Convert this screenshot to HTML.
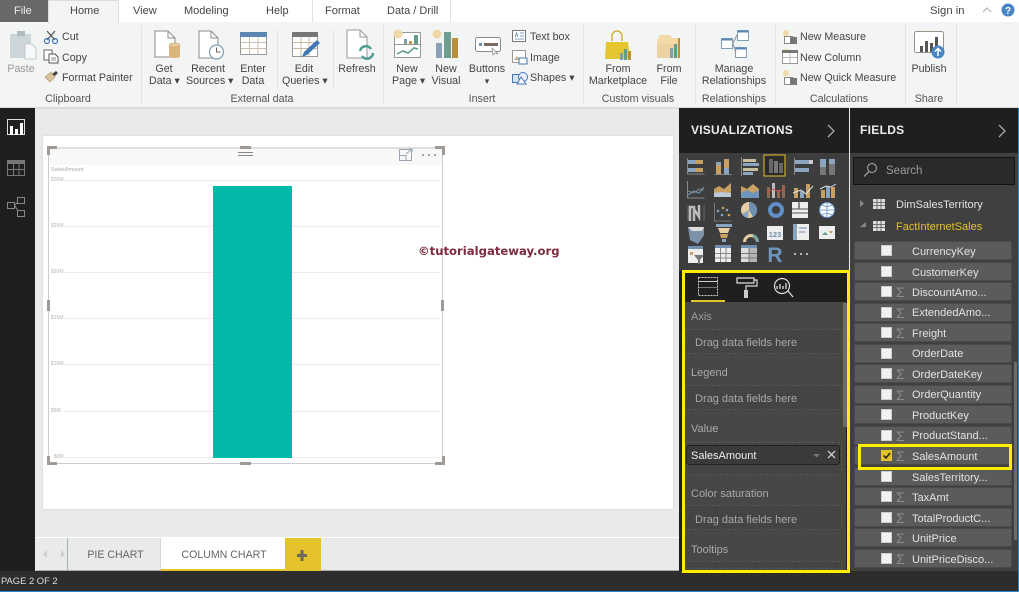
<!DOCTYPE html>
<html><head><meta charset="utf-8"><style>
*{box-sizing:border-box}
html,body{margin:0;padding:0}
body{width:1019px;height:592px;overflow:hidden;position:relative;background:#e9eaea;font-family:"Liberation Sans",sans-serif;font-size:11px;color:#444}
.a{position:absolute}
.t{position:absolute;white-space:nowrap;line-height:14px}
.c{transform:translateX(-50%)}
.g{color:#555}
.w{color:#a9a9a9;font-size:11px;margin-top:1px}
.dz{position:absolute;left:685px;width:157px;border:1px dashed #555;background:#444;border-radius:2px}
.r{position:absolute;left:854px;width:158px;height:19px;background:#5b5b5b;border:1px solid #4a4a4a;border-radius:2px}
.cb{position:absolute;left:881px;width:11px;height:11px;background:#f2f2f2;border:1px solid #ccc}
.s{position:absolute;left:896px;color:#8d8d8d;font-size:14px;line-height:14px}
.f{position:absolute;left:912px;color:#e2e2e2;font-size:11px;line-height:14px;white-space:nowrap;margin-top:1px}
.ax{position:absolute;left:51px;font-size:5px;color:#b5b5b5;line-height:6px}
.gl{position:absolute;left:64px;width:376px;height:1px;background:#ededed}
.h{position:absolute;background:#a09a96}
</style></head><body>

<!-- ribbon -->
<div class="a" style="left:0;top:0;width:1019px;height:22px;background:#fff"></div>
<div class="a" style="left:0;top:22px;width:1019px;height:85px;background:#f3f4f4"></div>
<div class="a" style="left:0;top:107px;width:1019px;height:2px;background:#dcdcdc"></div>
<div class="a" style="left:0;top:0;width:48px;height:22px;background:#686868"></div>
<div class="a" style="left:48px;top:0;width:71px;height:23px;background:#f3f4f4;border:1px solid #ddd;border-bottom:0"></div>
<div class="a" style="left:312px;top:0;width:1px;height:22px;background:#e2e2e2"></div>
<div class="a" style="left:450px;top:0;width:1px;height:22px;background:#e2e2e2"></div>
<div class="t" style="left:14px;top:4px;color:#eee">File</div>
<div class="t" style="left:70px;top:4px">Home</div>
<div class="t" style="left:133px;top:4px">View</div>
<div class="t" style="left:184px;top:4px">Modeling</div>
<div class="t" style="left:266px;top:4px">Help</div>
<div class="t" style="left:325px;top:4px">Format</div>
<div class="t" style="left:387px;top:4px">Data / Drill</div>
<div class="t" style="left:930px;top:4px;font-size:11.300px">Sign in</div>

<svg class="a" style="left:0;top:0" width="1019" height="108" viewBox="0 0 1019 108" fill="none">
<g stroke="#e0e1e1"><path d="M141.500 25V104M277.500 30V88M333.500 30V88M383.500 25V104M583.500 25V104M695.500 25V104M775.500 25V104M905.500 25V104M956.500 25V104"/></g>
<path d="M983 12l4-4 4 4" stroke="#bbb" stroke-width="1.300"/>
<circle cx="1008" cy="10" r="6.500" fill="#4a86c5"/>
<text x="1008" y="14" font-family="Liberation Sans" font-size="10" font-weight="bold" fill="#fff" text-anchor="middle">?</text>
<!-- paste -->
<rect x="10" y="34" width="21" height="24" fill="#ccd5da"/><rect x="17" y="31" width="8" height="5" fill="#aebcc5"/><path d="M25 44h7l4 4v11H25z" fill="#f7f9fa" stroke="#c3cbd0"/>
<!-- cut -->
<path d="M47 31l8 9M55 31l-8 9" stroke="#555" stroke-width="1.300"/><circle cx="47" cy="41" r="2.500" stroke="#3f78b5" stroke-width="1.200"/><circle cx="55" cy="41" r="2.500" stroke="#3f78b5" stroke-width="1.200"/>
<!-- copy -->
<path d="M44 50h8v10h-8z" fill="#fff" stroke="#666"/><path d="M49 54h6l3 3v6h-9z" fill="#fff" stroke="#555"/><path d="M51 58h5M51 60h5" stroke="#888"/>
<!-- painter -->
<path d="M45 77l6-5 4 5-5 5z" fill="#d8c49a" stroke="#aa9568" stroke-width=".6"/><path d="M52 74l4-3 2 2-3 3z" fill="#444"/>
<!-- get data -->
<path d="M155 31h13l7 7v19h-20z" fill="#fff" stroke="#8b8b8b"/><path d="M168 31v7h7" stroke="#8b8b8b"/><path d="M169 45v12q5 2 11 0V45z" fill="#dcb57a"/><ellipse cx="174.500" cy="45" rx="5.500" ry="2" fill="#e8cda3" stroke="#c79d5f" stroke-width=".5"/>
<!-- recent -->
<path d="M199 31h12l7 7v20h-19z" fill="#fff" stroke="#8b8b8b"/><path d="M211 31v7h7" stroke="#8b8b8b"/><circle cx="216.500" cy="52" r="7" fill="#fff" stroke="#7d9fb8" stroke-width="1.200"/><path d="M216.500 47.500V52h4" stroke="#666"/>
<!-- enter data -->
<rect x="240.500" y="32.500" width="26" height="22" fill="#fff" stroke="#9a9a9a"/><rect x="240" y="32" width="27" height="5" fill="#5d86b3"/><path d="M241 42.500h25M241 48.500h25M249.500 37v17M258 37v17" stroke="#c9c0b0"/>
<!-- edit queries -->
<rect x="292.500" y="32.500" width="25" height="24" fill="#fff" stroke="#9a9a9a"/><rect x="292" y="32" width="26" height="5" fill="#777"/><path d="M293 42.500h24M293 48.500h24M301 37v19M309 37v19" stroke="#c9b9a0"/><path d="M302 57l2-5 13-12 3 3-13 12z" fill="#3f78b5"/>
<!-- refresh -->
<path d="M347 30h13l7 7v21h-20z" fill="#fff" stroke="#9a9a9a"/><path d="M360 30v7h7" stroke="#9a9a9a"/><path d="M360 51a6 6 0 0 1 11-2M373 53a6 6 0 0 1-11 3" stroke="#4f9d8f" stroke-width="2.500"/>
<!-- new page -->
<rect x="394.500" y="32.500" width="26" height="25" fill="#fff" stroke="#9a9a9a"/><path d="M394 44.500h27" stroke="#999"/><rect x="404" y="39" width="3" height="5" fill="#7f9fb0"/><rect x="409" y="41" width="3" height="3" fill="#c09a55"/><rect x="414" y="35" width="4" height="9" fill="#5f9d8d"/><path d="M397 54l6-3 5 2 6-5 4 1" stroke="#5f9d8d" stroke-width="1.500"/><circle cx="398" cy="34" r="4.500" fill="#f0d9a8"/>
<!-- new visual -->
<circle cx="437" cy="34" r="4.500" fill="#f0d9a8"/><rect x="436" y="43" width="6" height="15" fill="#8ba0b6"/><rect x="444" y="32" width="7" height="26" fill="#6f9e90"/><rect x="452" y="38" width="6" height="20" fill="#b59040"/>
<!-- buttons -->
<rect x="475.500" y="37.500" width="25" height="14" rx="2" fill="#fff" stroke="#888"/><rect x="479" y="43" width="3" height="3" fill="#6b93b8"/><rect x="484" y="43" width="14" height="3" fill="#7a6a60"/><path d="M492 48l1 7 2-2 3 1z" fill="#fff" stroke="#888" stroke-width=".7"/>
<!-- text box -->
<rect x="512.500" y="30.500" width="13" height="11" fill="#fff" stroke="#777"/><path d="M515 37l1.500-4 1.500 4M520 33h4M520 36h4M515 39h9" stroke="#4f7fae" stroke-width=".8"/>
<!-- image -->
<rect x="512.500" y="50.500" width="13" height="12" fill="#fff" stroke="#999"/><path d="M514 60l3-4 3 4z" fill="#c6b38c"/><rect x="519" y="58" width="8" height="6" fill="#fff" stroke="#3f78b5"/>
<!-- shapes -->
<rect x="512.500" y="74.500" width="8" height="8" fill="#d6e4f0" stroke="#3f78b5"/><circle cx="523" cy="77" r="4.500" fill="#eef" stroke="#3f78b5"/><path d="M517 84l4-7 5 7z" fill="#fff" stroke="#3f78b5"/>
<!-- marketplace -->
<path d="M606 42h22l2 17h-25z" fill="#e6c62f"/><path d="M612 41v-5a5 5 0 0 1 10 0v5" stroke="#c9ab2a" stroke-width="1.300"/><rect x="620" y="53" width="3" height="7" fill="#7f9fb0"/><rect x="624" y="49" width="3" height="11" fill="#5f9d8d"/><rect x="628" y="51" width="3" height="9" fill="#b59040"/>
<!-- from file -->
<path d="M657 40l3-5h10l2 3h8v20h-23z" fill="#f3d9a6"/><path d="M657 44h23v14h-23z" fill="#ecd3a4"/><rect x="670" y="48" width="3" height="10" fill="#7f9fb0"/><rect x="674" y="44" width="3" height="14" fill="#5f9d8d"/><rect x="678" y="38" width="2" height="20" fill="#b59040"/>
<!-- manage rel -->
<rect x="737.500" y="30.500" width="11" height="10" fill="#fff" stroke="#7f9fb8"/><rect x="721.500" y="38.500" width="11" height="10" fill="#fff" stroke="#7f9fb8"/><rect x="735.500" y="47.500" width="11" height="10" fill="#fff" stroke="#7f9fb8"/><path d="M733 43l4-8M733 44l3 8" stroke="#888"/><path d="M738 31.500h10M722 39.500h10M736 48.500h10" stroke="#5d86b3" stroke-width="2"/>
<!-- calc icons -->
<circle cx="786" cy="33" r="3" fill="#f0d9a8"/><path d="M784.500 36.500h8l4 3v4h-12z" fill="#fff" stroke="#888"/><rect x="790" y="37" width="7" height="7" fill="#777"/>
<circle cx="786" cy="52" r="3" fill="#f0d9a8"/><rect x="782.500" y="50.500" width="15" height="13" fill="#fff" stroke="#999"/><rect x="782" y="50" width="16" height="3" fill="#777"/><path d="M783 57.500h14M790 53v10" stroke="#bbb"/>
<circle cx="786" cy="73" r="3" fill="#f0d9a8"/><path d="M784.500 77.500h8l4 3v4h-12z" fill="#fff" stroke="#888"/><rect x="790" y="78" width="7" height="7" fill="#777"/>
<!-- publish -->
<rect x="914.500" y="31.500" width="29" height="21" rx="2" fill="#fff" stroke="#9a9187"/><rect x="920" y="46" width="3" height="6" fill="#555"/><rect x="925" y="41" width="3" height="11" fill="#555"/><rect x="930" y="43" width="3" height="9" fill="#555"/><rect x="935" y="37" width="3" height="12" fill="#555"/><circle cx="938" cy="52" r="6.500" fill="#4a86c5"/><path d="M938 56v-7M935 51.500l3-3 3 3" stroke="#fff" stroke-width="1.500"/>
</svg>

<div class="a" style="left:0;top:1px;width:1019px;height:107px;font-size:10.700px">
<div class="t" style="left:62px;top:29px">Cut</div>
<div class="t" style="left:62px;top:50px">Copy</div>
<div class="t" style="left:62px;top:70px">Format Painter</div>
<div class="t c" style="left:21px;top:61px;color:#999">Paste</div>
<div class="t c" style="left:164px;top:61px">Get</div>
<div class="t" style="left:149px;top:73px">Data ▾</div>
<div class="t c" style="left:208px;top:61px">Recent</div>
<div class="t" style="left:186px;top:73px">Sources ▾</div>
<div class="t c" style="left:253px;top:61px">Enter</div>
<div class="t c" style="left:253px;top:73px">Data</div>
<div class="t c" style="left:304px;top:61px">Edit</div>
<div class="t" style="left:282px;top:73px">Queries ▾</div>
<div class="t c" style="left:357px;top:61px">Refresh</div>
<div class="t c" style="left:407px;top:61px">New</div>
<div class="t" style="left:392px;top:73px">Page ▾</div>
<div class="t c" style="left:446px;top:61px">New</div>
<div class="t c" style="left:446px;top:73px">Visual</div>
<div class="t c" style="left:487px;top:61px">Buttons</div>
<div class="t c" style="left:487px;top:73px;font-size:9px">▾</div>
<div class="t" style="left:530px;top:29px">Text box</div>
<div class="t" style="left:530px;top:50px">Image</div>
<div class="t" style="left:530px;top:70px">Shapes ▾</div>
<div class="t c" style="left:618px;top:61px">From</div>
<div class="t c" style="left:618px;top:73px">Marketplace</div>
<div class="t c" style="left:669px;top:61px">From</div>
<div class="t c" style="left:669px;top:73px">File</div>
<div class="t c" style="left:734px;top:61px">Manage</div>
<div class="t c" style="left:734px;top:73px">Relationships</div>
<div class="t" style="left:800px;top:29px">New Measure</div>
<div class="t" style="left:800px;top:50px">New Column</div>
<div class="t" style="left:800px;top:70px">New Quick Measure</div>
<div class="t c" style="left:929px;top:61px">Publish</div>
<div class="t c g" style="left:68px;top:91px">Clipboard</div>
<div class="t c g" style="left:262px;top:91px">External data</div>
<div class="t c g" style="left:482px;top:91px">Insert</div>
<div class="t c g" style="left:638px;top:91px">Custom visuals</div>
<div class="t c g" style="left:734px;top:91px">Relationships</div>
<div class="t c g" style="left:839px;top:91px">Calculations</div>
<div class="t c g" style="left:929px;top:91px">Share</div>
</div>

<!-- left rail -->
<div class="a" style="left:0;top:108px;width:35px;height:463px;background:#1f1f1f"></div>
<svg class="a" style="left:0;top:108px" width="35" height="110" fill="none">
<rect x="7.500" y="11.500" width="17" height="15" stroke="#ddd"/><rect x="10" y="18" width="3" height="9" fill="#fff"/><rect x="15" y="21" width="3" height="6" fill="#fff"/><rect x="20" y="15" width="3" height="12" fill="#fff"/>
<rect x="7.500" y="52.500" width="17" height="15" stroke="#777"/><rect x="7" y="52" width="18" height="4" fill="#777"/><path d="M8 61.500h16M13.500 56v11M19 56v11" stroke="#777"/>
<rect x="17.500" y="89.500" width="7" height="6" stroke="#888"/><rect x="7.500" y="94.500" width="7" height="6" stroke="#888"/><rect x="17.500" y="102.500" width="7" height="6" stroke="#888"/><path d="M15 97l3-3M15 98l3 5" stroke="#888"/>
</svg>

<!-- canvas -->
<div class="a" style="left:43px;top:136px;width:630px;height:373px;background:#fff;box-shadow:0 0 2px #ccc"></div>
<div class="a" style="left:48px;top:147px;width:395px;height:317px;border:1px solid #c8ced4"></div>
<div class="a" style="left:49px;top:148px;width:393px;height:17px;background:#f7f8f7"></div>
<div class="a" style="left:48px;top:147px;width:395px;height:2px;background:#dfdfdf"></div>
<div class="a" style="left:51px;top:167px;font-size:5.500px;color:#aaa;line-height:7px">SalesAmount</div>
<div class="gl" style="top:180px"></div><div class="gl" style="top:226px"></div><div class="gl" style="top:272px"></div><div class="gl" style="top:318px"></div><div class="gl" style="top:364px"></div><div class="gl" style="top:411px"></div><div class="gl" style="top:457px"></div>
<div class="ax" style="top:177px">$30M</div><div class="ax" style="top:223px">$25M</div><div class="ax" style="top:269px">$20M</div><div class="ax" style="top:315px">$15M</div><div class="ax" style="top:361px">$10M</div><div class="ax" style="top:408px">$5M</div><div class="ax" style="top:454px;left:54px">$0M</div>
<div class="a" style="left:213px;top:186px;width:79px;height:272px;background:#01b8aa"></div>
<!-- handles -->
<div class="h" style="left:47px;top:146px;width:10px;height:3px"></div><div class="h" style="left:47px;top:146px;width:3px;height:9px"></div>
<div class="h" style="left:435px;top:146px;width:10px;height:3px"></div><div class="h" style="left:442px;top:146px;width:3px;height:9px"></div>
<div class="h" style="left:47px;top:462px;width:10px;height:3px"></div><div class="h" style="left:47px;top:456px;width:3px;height:9px"></div>
<div class="h" style="left:435px;top:462px;width:10px;height:3px"></div><div class="h" style="left:442px;top:456px;width:3px;height:9px"></div>
<div class="h" style="left:240px;top:146px;width:11px;height:3px"></div><div class="h" style="left:240px;top:462px;width:11px;height:3px"></div>
<div class="h" style="left:47px;top:300px;width:3px;height:11px"></div><div class="h" style="left:441px;top:300px;width:3px;height:11px"></div>
<svg class="a" style="left:230px;top:148px" width="215" height="18" fill="none">
<path d="M8 4.500h15M8 7.500h15" stroke="#888"/>
<rect x="169.500" y="1.500" width="12" height="11" stroke="#9aa5b0"/><path d="M169 7.500h7v5M176 6l6-5M179 1h3v3" stroke="#9aa5b0"/>
<circle cx="193" cy="7" r="1" fill="#888"/><circle cx="199" cy="7" r="1" fill="#888"/><circle cx="205" cy="7" r="1" fill="#888"/>
</svg>
<div class="t" style="left:418px;top:244px;font-family:'DejaVu Sans',sans-serif;font-weight:bold;font-size:11.650px;color:#7d2b3d">©tutorialgateway.org</div>

<!-- page tabs -->
<div class="a" style="left:36px;top:537px;width:643px;height:1px;background:#fff"></div>
<div class="a" style="left:67px;top:538px;width:1px;height:33px;background:#aab0b8"></div>
<div class="a" style="left:160px;top:538px;width:1px;height:33px;background:#d4d8dc"></div>
<div class="a" style="left:161px;top:538px;width:124px;height:33px;background:#fff"></div>
<div class="a" style="left:161px;top:569px;width:124px;height:2px;background:#e3c22b"></div>
<div class="a" style="left:285px;top:538px;width:36px;height:33px;background:#e3c22b"></div>
<div class="a" style="left:36px;top:570px;width:125px;height:1px;background:#aaa"></div>
<div class="a" style="left:321px;top:570px;width:358px;height:1px;background:#aaa"></div>
<svg class="a" style="left:36px;top:545px" width="285" height="20"><path d="M7 9l-4 4 4 4zM21 9l4 4-4 4z" transform="translate(4 -4)" fill="#cfcfcf"/><path d="M261 8h10v3h-10zM264.500 4h3v11h-3z" transform="translate(0 1)" fill="#6d6a58"/></svg>
<div class="t c" style="left:115.500px;top:548px;color:#666;font-size:10.600px">PIE CHART</div>
<div class="t c" style="left:224px;top:548px;color:#666;font-size:10.600px">COLUMN CHART</div>

<!-- status bar -->
<div class="a" style="left:0;top:571px;width:1019px;height:21px;background:#2d2d2d"></div>
<div class="a" style="left:0;top:591px;width:1019px;height:1px;background:#2a86c8"></div>
<div class="t" style="left:1px;top:574px;color:#ddd;font-size:9.400px">PAGE 2 OF 2</div>

<!-- viz pane -->
<div class="a" style="left:679px;top:108px;width:170px;height:463px;background:#1f1f1f"></div>
<div class="a" style="left:679px;top:153px;width:170px;height:118px;background:#3d3d3d"></div>
<div class="a" style="left:685px;top:302px;width:161px;height:268px;background:#474747"></div>
<div class="t" style="left:691px;top:123px;color:#eee;font-size:12px;font-weight:bold;letter-spacing:.2px">VISUALIZATIONS</div>
<svg class="a" style="left:825px;top:123px" width="14" height="16" fill="none"><path d="M3 2l6 6-6 6" stroke="#aaa" stroke-width="1.300"/></svg>
<svg class="a" style="left:679px;top:153px" width="170" height="118" fill="none">
<rect x="85" y="2" width="21" height="21" fill="#2b2b2b" stroke="#e3c22b"/>
<g fill="#8aa5bf"><rect x="9" y="7" width="8" height="4"/><rect x="9" y="15" width="8" height="4"/></g><g fill="#c7a062"><rect x="17" y="7" width="7" height="4"/><rect x="17" y="15" width="7" height="4"/></g><path d="M8.500 5v16h17" stroke="#888"/>
<rect x="37" y="12" width="5" height="9" fill="#c7a062"/><rect x="37" y="9" width="5" height="3" fill="#8aa5bf"/><rect x="45" y="6" width="5" height="9" fill="#c7a062"/><rect x="45" y="15" width="5" height="6" fill="#8aa5bf"/><path d="M35.500 21.500h17" stroke="#888"/>
<g fill="#c7bda0"><rect x="64" y="6" width="13" height="3"/><rect x="64" y="15" width="15" height="3"/></g><g fill="#8aa5bf"><rect x="64" y="10" width="16" height="3"/><rect x="64" y="19" width="10" height="3"/></g><path d="M62.500 4v19" stroke="#888"/>
<rect x="90" y="6" width="4" height="14" fill="#666"/><rect x="95" y="8" width="4" height="12" fill="#777"/><rect x="100" y="10" width="4" height="10" fill="#666"/>
<rect x="116" y="7" width="14" height="4" fill="#8aa5bf"/><rect x="116" y="15" width="14" height="4" fill="#8aa5bf"/><rect x="130" y="7" width="4" height="4" fill="#ccc"/><path d="M115.500 5v17" stroke="#888"/>
<rect x="141" y="6" width="6" height="8" fill="#8aa5bf"/><rect x="141" y="14" width="6" height="8" fill="#777"/><rect x="150" y="6" width="6" height="5" fill="#8aa5bf"/><rect x="150" y="11" width="6" height="11" fill="#777"/>
<path d="M9 42l6-4 5 2 5-6" stroke="#6f8fb0" stroke-width="1.300"/><path d="M9 38l6 2 5-4 5 1" stroke="#888"/><path d="M8.500 28v17h17" stroke="#888"/>
<path d="M35 44v-8l5-3 5 3 7-6v14z" fill="#c7a062"/><path d="M35 44v-4l8-1 9 1v4z" fill="#b9c9d9"/>
<path d="M62 45V33l6 3 6-5 6 5V45z" fill="#c7a062"/><path d="M62 40l6-3 6 3 6-3v8H62z" fill="#6f95bf"/>
<g fill="#8d6a50"><rect x="88" y="34" width="3" height="11"/><rect x="98" y="37" width="3" height="8"/><rect x="103" y="32" width="3" height="13"/></g><rect x="93" y="30" width="3" height="15" fill="#bbb"/><path d="M88 40l6-4 6 3 6-5" stroke="#c7505a"/>
<g fill="#c7a062"><rect x="115" y="35" width="4" height="10"/><rect x="127" y="31" width="4" height="14"/></g><rect x="121" y="38" width="4" height="7" fill="#8aa5bf"/><path d="M114 40l8-3 5 4 7-8" stroke="#ddd"/>
<g fill="#c7a062"><rect x="142" y="37" width="4" height="8"/><rect x="152" y="34" width="4" height="11"/></g><g fill="#8aa5bf"><rect x="147" y="33" width="4" height="12"/></g><path d="M141 36l6-3 5 1 5-3" stroke="#ddd"/>
<path d="M9 52.500V68M25 52v16" stroke="#666"/><path d="M11 68V54h4v14M15 56l5 8v-12" stroke="#bbb" stroke-width="2.500"/>
<g fill="#8aa5bf"><circle cx="39" cy="58" r="1.300"/><circle cx="48" cy="57" r="1.300"/><circle cx="43" cy="62" r="1.300"/></g><g fill="#c7a062"><circle cx="44" cy="55" r="1.300"/><circle cx="50" cy="62" r="1.300"/></g><path d="M35.500 50v18h17" stroke="#777"/>
<circle cx="70" cy="57" r="8" fill="#e8cda3"/><path d="M70 57V49a8 8 0 0 1 4 15z" fill="#6f8fb0"/><path d="M70 57l-7 4a8 8 0 0 0 6 4z" fill="#8aa5bf"/>
<circle cx="97" cy="57" r="6" stroke="#5f8fc5" stroke-width="4"/>
<rect x="113" y="49" width="16" height="16" fill="#eee"/><path d="M113 56h16M120 49v7M113 60h16" stroke="#555"/><rect x="119" y="50" width="2" height="5" fill="#888"/>
<circle cx="148" cy="57" r="7.500" fill="#fff" stroke="#5f8fc5"/><path d="M141 57h15M148 50v15M143 52q5 3 10 0M143 62q5-3 10 0" stroke="#5f8fc5" stroke-width=".8"/>
<path d="M9 74h16v8l-6 9-8-4z" fill="#7d93aa"/><path d="M9 74h16l-2 4h-10z" fill="#ddd"/>
<rect x="37" y="71" width="16" height="3" fill="#8aa5bf"/><path d="M39 75h12l-2 5h-8z" fill="#e8cda3"/><path d="M41 81h8l-1 4h-6z" fill="#c7a062"/><path d="M43 86h4v3h-4z" fill="#8aa5bf"/>
<path d="M64 89a8 8 0 0 1 16 0h-3a5 5 0 0 0-10 0z" fill="#e8cda3"/><path d="M74 81a8 8 0 0 1 6 8h-3a5 5 0 0 0-3-5z" fill="#6fa59a"/>
<rect x="88" y="73" width="16" height="14" fill="#eee"/><text x="96" y="84" font-family="Liberation Sans" font-size="7.500" font-weight="bold" fill="#6f8fb0" text-anchor="middle">123</text>
<rect x="114" y="71" width="16" height="16" fill="#eee"/><rect x="114" y="71" width="4" height="16" fill="#8aa5bf"/><path d="M120 75h8M120 79h6" stroke="#6f8fb0"/>
<rect x="140" y="73" width="16" height="13" fill="#eee"/><path d="M143 82l3-3 3 3z" fill="#5f9d8d"/><path d="M150 78h4l-2 3z" fill="#c7a062"/>
<rect x="9" y="93" width="15" height="17" fill="#eee"/><rect x="9" y="93" width="15" height="3" fill="#6f8fb0"/><rect x="11" y="99" width="3" height="3" fill="#c7a062"/><path d="M15 102h10l-4 5v4h-2v-4z" fill="#777"/>
<rect x="36" y="92" width="16" height="17" fill="#eee"/><rect x="36" y="92" width="16" height="3" fill="#6f8fb0"/><path d="M36 100.500h16M36 105h16M41.500 95v14M47 95v14" stroke="#888"/>
<rect x="62" y="92" width="16" height="17" fill="#ddd"/><rect x="62" y="92" width="16" height="3" fill="#6f8fb0"/><rect x="70" y="95" width="8" height="14" fill="#b5b5b5"/><path d="M62 100.500h16M62 105h16M70 95v14" stroke="#777"/>
<text x="96" y="109" font-family="Liberation Sans" font-size="21" font-weight="bold" fill="#6f95bf" text-anchor="middle">R</text>
<circle cx="116" cy="101" r="1" fill="#ddd"/><circle cx="122" cy="101" r="1" fill="#ddd"/><circle cx="128" cy="101" r="1" fill="#ddd"/>
</svg>

<!-- wells -->
<div class="a" style="left:843px;top:303px;width:4px;height:124px;background:#6b6b6b"></div>
<div class="t w" style="left:691px;top:309px;color:#9a9a9a">Axis</div>
<div class="dz" style="top:329px;height:25px"></div><div class="t w" style="left:695px;top:335px">Drag data fields here</div>
<div class="t w" style="left:691px;top:365px">Legend</div>
<div class="dz" style="top:385px;height:25px"></div><div class="t w" style="left:695px;top:391px">Drag data fields here</div>
<div class="t w" style="left:691px;top:421px">Value</div>
<div class="dz" style="top:442px;height:33px"></div>
<div class="a" style="left:686px;top:445px;width:154px;height:20px;background:#3a3a3a;border:1px solid #222;border-radius:3px"></div>
<div class="t" style="left:691px;top:449px;color:#eee;font-size:11px">SalesAmount</div>
<svg class="a" style="left:810px;top:448px" width="30" height="14" fill="none"><path d="M3 6h7l-3.500 3.500z" fill="#777"/><path d="M18 3l7 7M25 3l-7 7" stroke="#ddd" stroke-width="1.200"/></svg>
<div class="t w" style="left:691px;top:486px">Color saturation</div>
<div class="dz" style="top:505px;height:25px"></div><div class="t w" style="left:695px;top:512px">Drag data fields here</div>
<div class="t w" style="left:691px;top:542px">Tooltips</div>
<div class="dz" style="top:561px;height:8px"></div>
<div class="a" style="left:682px;top:270px;width:168px;height:303px;border:3px solid #ffed00"></div>
<div class="a" style="left:685px;top:273px;width:162px;height:29px;background:#1f1f1f"></div>
<svg class="a" style="left:690px;top:274px" width="110" height="27" fill="none">
<rect x="8.500" y="3.500" width="19" height="18" stroke="#ccc" stroke-dasharray="2 1"/><path d="M8 7.500h20" stroke="#ccc"/><path d="M9 13.500h18" stroke="#777"/>
<path d="M47 4h17v5H47zM64 6h3v6H56v4" stroke="#ddd" stroke-width="1.200"/><rect x="54" y="16" width="4" height="8" fill="#ccc"/>
<circle cx="92" cy="12" r="7.500" stroke="#ddd" stroke-width="1.200"/><path d="M87 15v-3M90 15v-5M93 15v-3M96 15v-6M98 17l5 6" stroke="#ddd" stroke-width="1.300"/>
</svg>
<div class="a" style="left:691px;top:300px;width:34px;height:2px;background:#e3c22b"></div>

<!-- fields pane -->
<div class="a" style="left:850px;top:108px;width:169px;height:463px;background:#1f1f1f"></div>
<div class="a" style="left:850px;top:153px;width:169px;height:418px;background:#404040"></div>
<div class="t" style="left:860px;top:123px;color:#eee;font-size:12px;font-weight:bold;letter-spacing:.3px">FIELDS</div>
<svg class="a" style="left:996px;top:123px" width="14" height="16" fill="none"><path d="M3 2l6 6-6 6" stroke="#aaa" stroke-width="1.300"/></svg>
<div class="a" style="left:853px;top:157px;width:162px;height:28px;background:#2a2a2a;border:1px solid #111"></div>
<svg class="a" style="left:862px;top:161px" width="18" height="18" fill="none"><circle cx="10" cy="7" r="4.500" stroke="#999" stroke-width="1.200"/><path d="M7 10.500l-5 5" stroke="#999" stroke-width="1.300"/></svg>
<div class="t" style="left:886px;top:164px;color:#999;font-size:11.500px">Search</div>
<svg class="a" style="left:858px;top:195px" width="32" height="40" fill="none"><path d="M2 5l4 3.500-4 3.500z" fill="#888"/><path d="M8 27v5H2z" fill="#888"/><g fill="#ddd"><rect x="15" y="4" width="12" height="10"/><rect x="15" y="26" width="12" height="10"/></g><path d="M15 7.500h12M15 10.500h12M19 4v10M23 4v10M15 29.500h12M15 32.500h12M19 26v10M23 26v10" stroke="#555" stroke-width=".8"/></svg>
<div class="f" style="left:896px;top:197px">DimSalesTerritory</div>
<div class="f" style="left:896px;top:219px;color:#e3c22b">FactInternetSales</div>

<div class="r" style="top:241px"></div><div class="cb" style="top:245px"></div><div class="f" style="top:244px">CurrencyKey</div>
<div class="r" style="top:262px"></div><div class="cb" style="top:266px"></div><div class="f" style="top:265px">CustomerKey</div>
<div class="r" style="top:282px"></div><div class="cb" style="top:286px"></div><div class="s" style="top:285px">Σ</div><div class="f" style="top:285px">DiscountAmo...</div>
<div class="r" style="top:303px"></div><div class="cb" style="top:307px"></div><div class="s" style="top:306px">Σ</div><div class="f" style="top:305px">ExtendedAmo...</div>
<div class="r" style="top:323px"></div><div class="cb" style="top:327px"></div><div class="s" style="top:326px">Σ</div><div class="f" style="top:326px">Freight</div>
<div class="r" style="top:344px"></div><div class="cb" style="top:348px"></div><div class="f" style="top:346px">OrderDate</div>
<div class="r" style="top:364px"></div><div class="cb" style="top:368px"></div><div class="s" style="top:367px">Σ</div><div class="f" style="top:367px">OrderDateKey</div>
<div class="r" style="top:385px"></div><div class="cb" style="top:389px"></div><div class="s" style="top:388px">Σ</div><div class="f" style="top:387px">OrderQuantity</div>
<div class="r" style="top:405px"></div><div class="cb" style="top:409px"></div><div class="f" style="top:408px">ProductKey</div>
<div class="r" style="top:426px"></div><div class="cb" style="top:430px"></div><div class="s" style="top:429px">Σ</div><div class="f" style="top:428px">ProductStand...</div>
<div class="r" style="top:446px"></div><div class="cb" style="top:450px;background:#e3c22b;border-color:#e3c22b"></div><div class="s" style="top:449px">Σ</div><div class="f" style="top:449px">SalesAmount</div>
<svg class="a" style="left:881px;top:450px" width="11" height="11" fill="none"><path d="M2.500 5.500l2.500 2.500 4-5" stroke="#222" stroke-width="1.500"/></svg>
<div class="r" style="top:467px"></div><div class="cb" style="top:471px"></div><div class="f" style="top:470px">SalesTerritory...</div>
<div class="r" style="top:487px"></div><div class="cb" style="top:491px"></div><div class="s" style="top:490px">Σ</div><div class="f" style="top:490px">TaxAmt</div>
<div class="r" style="top:508px"></div><div class="cb" style="top:512px"></div><div class="s" style="top:511px">Σ</div><div class="f" style="top:511px">TotalProductC...</div>
<div class="r" style="top:528px"></div><div class="cb" style="top:532px"></div><div class="s" style="top:531px">Σ</div><div class="f" style="top:531px">UnitPrice</div>
<div class="r" style="top:549px"></div><div class="cb" style="top:553px"></div><div class="s" style="top:552px">Σ</div><div class="f" style="top:552px">UnitPriceDisco...</div>
<div class="a" style="left:1014px;top:362px;width:3px;height:178px;background:#6b6b6b"></div>
<div class="a" style="left:858px;top:444px;width:154px;height:26px;border:3px solid #ffed00"></div>
<div class="a" style="left:1018px;top:108px;width:1px;height:484px;background:#1e88d0"></div>
</body></html>
